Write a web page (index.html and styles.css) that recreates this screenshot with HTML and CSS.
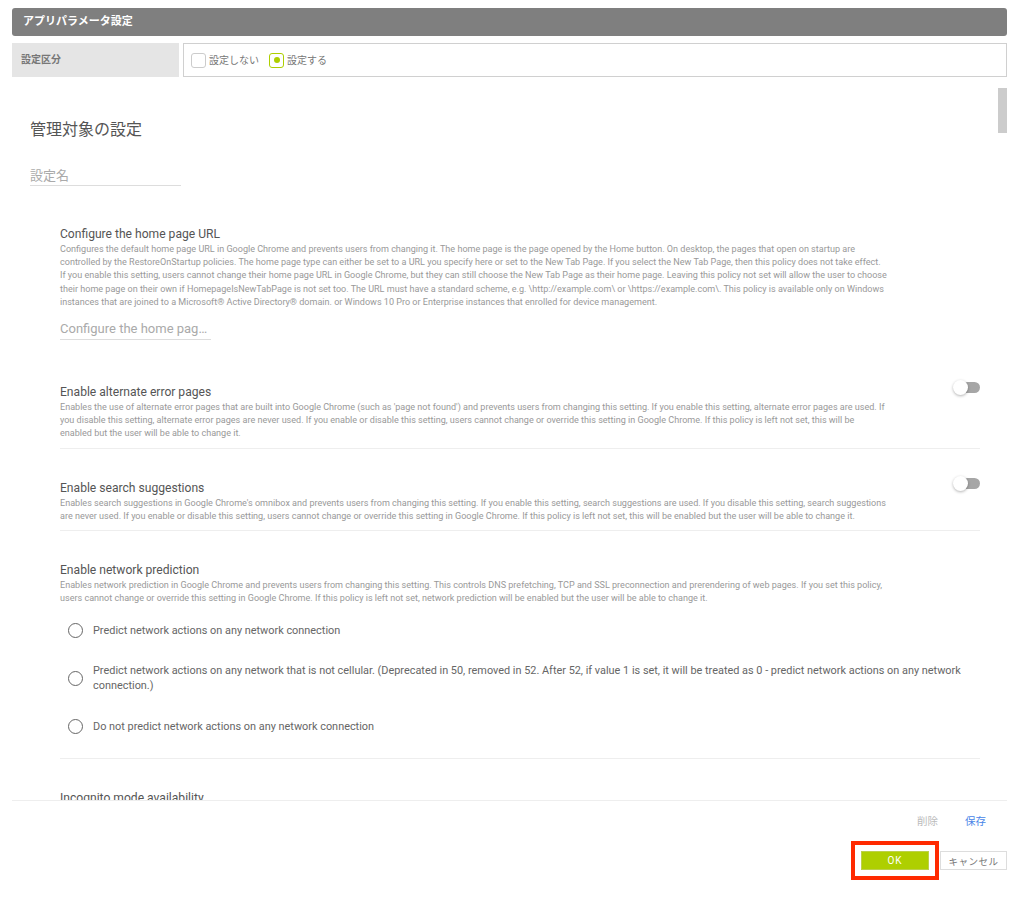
FILE: index.html
```html
<!DOCTYPE html>
<html lang="ja">
<head>
    <meta charset="UTF-8">
    <meta name="viewport" content="width=device-width, initial-scale=1.0">
    <title>アプリパラメータ設定</title>
    <link rel="stylesheet" href="styles.css">
</head>
<body>
    <div class="panel-title">アプリパラメータ設定</div>
    <div class="setting-row">
        <div class="setting-label">設定区分</div>
        <div class="setting-value">
            <span class="check-box"></span>
            <span class="check-text">設定しない</span>
            <span class="check-box checked"></span>
            <span class="check-text">設定する</span>
        </div>
    </div>

    <div class="scroll-area">
        <div class="scroll-thumb"></div>
        <h2 class="page-title">管理対象の設定</h2>
        <div class="name-field">設定名</div>

        <div class="policy policy-url">
            <div class="policy-name">Configure the home page URL</div>
            <p class="policy-desc">Configures the default home page URL in Google Chrome and prevents users from changing it. The home page is the page opened by the Home button. On desktop, the pages that open on startup are controlled by the RestoreOnStartup policies. The home page type can either be set to a URL you specify here or set to the New Tab Page. If you select the New Tab Page, then this policy does not take effect. If you enable this setting, users cannot change their home page URL in Google Chrome, but they can still choose the New Tab Page as their home page. Leaving this policy not set will allow the user to choose their home page on their own if HomepageIsNewTabPage is not set too. The URL must have a standard scheme, e.g. \http://example.com\ or \https://example.com\. This policy is available only on Windows instances that are joined to a Microsoft® Active Directory® domain. or Windows 10 Pro or Enterprise instances that enrolled for device management.</p>
            <div class="url-field">Configure the home pag…</div>
        </div>

        <div class="policy policy-alt has-line">
            <div class="policy-name">Enable alternate error pages</div>
            <span class="toggle"></span>
            <p class="policy-desc">Enables the use of alternate error pages that are built into Google Chrome (such as 'page not found') and prevents users from changing this setting. If you enable this setting, alternate error pages are used. If you disable this setting, alternate error pages are never used. If you enable or disable this setting, users cannot change or override this setting in Google Chrome. If this policy is left not set, this will be enabled but the user will be able to change it.</p>
        </div>

        <div class="policy policy-next has-line">
            <div class="policy-name">Enable search suggestions</div>
            <span class="toggle"></span>
            <p class="policy-desc">Enables search suggestions in Google Chrome's omnibox and prevents users from changing this setting. If you enable this setting, search suggestions are used. If you disable this setting, search suggestions are never used. If you enable or disable this setting, users cannot change or override this setting in Google Chrome. If this policy is left not set, this will be enabled but the user will be able to change it.</p>
        </div>

        <div class="policy policy-next policy-net has-line">
            <div class="policy-name">Enable network prediction</div>
            <p class="policy-desc">Enables network prediction in Google Chrome and prevents users from changing this setting. This controls DNS prefetching, TCP and SSL preconnection and prerendering of web pages. If you set this policy, users cannot change or override this setting in Google Chrome. If this policy is left not set, network prediction will be enabled but the user will be able to change it.</p>
            <div class="radio-list">
                <div class="radio-item"><span class="radio"></span><span>Predict network actions on any network connection</span></div>
                <div class="radio-item"><span class="radio"></span><span>Predict network actions on any network that is not cellular. (Deprecated in 50, removed in 52. After 52, if value 1 is set, it will be treated as 0 - predict network actions on any network connection.)</span></div>
                <div class="radio-item"><span class="radio"></span><span>Do not predict network actions on any network connection</span></div>
            </div>
        </div>

        <div class="policy policy-next">
            <div class="policy-name">Incognito mode availability</div>
        </div>
    </div>

    <div class="action-bar">
        <span class="link-delete">削除</span>
        <span class="link-save">保存</span>
    </div>
    <div class="button-row">
        <button class="btn-ok">OK</button>
        <button class="btn-cancel">キャンセル</button>
    </div>
</body>
</html>
```

FILE: styles.css
```css
html, body {
    height: 100%;
}
body {
    margin: 0;
    padding: 8px 14px 0 12px;
    box-sizing: border-box;
    overflow: hidden;
    background: #fff;
    font-family: Roboto, "Noto Sans CJK JP", sans-serif;
    color: #444;
}
.panel-title {
    height: 28px;
    line-height: 28px;
    padding-left: 11px;
    background: #7f7f7f;
    border-radius: 3px;
    color: #fff;
    font-size: 11px;
    font-weight: 700;
}
.setting-row {
    display: flex;
    gap: 4px;
    margin-top: 7px;
    height: 34px;
}
.setting-label {
    width: 167px;
    padding-left: 9px;
    box-sizing: border-box;
    line-height: 33px;
    background: #e5e5e5;
    color: #777;
    font-size: 10px;
    font-weight: 700;
}
.setting-value {
    flex: 1;
    display: flex;
    align-items: center;
    padding-left: 7px;
    border: 1px solid #d0d0d0;
    font-size: 10px;
    color: #777;
}
.check-box {
    position: relative;
    width: 13px;
    height: 13px;
    margin-right: 3px;
    border: 1px solid #ccc;
    border-radius: 3px;
}
.check-box.checked {
    border-color: #aecf00;
}
.check-box.checked::after {
    content: "";
    position: absolute;
    top: 3.5px;
    left: 3.5px;
    width: 6px;
    height: 6px;
    border-radius: 50%;
    background: #aecf00;
}
.check-text {
    margin-right: 10px;
    padding-top: 1px;
    line-height: 14px;
}
.scroll-area {
    position: relative;
    height: 723px;
    overflow: hidden;
}
.scroll-thumb {
    position: absolute;
    top: 11px;
    right: 0;
    width: 9px;
    height: 45px;
    background: #ccc;
}
.page-title {
    margin: 43px 0 0 18px;
    font-size: 16px;
    line-height: 20px;
    font-weight: 400;
    color: #555;
}
.name-field {
    width: 151px;
    height: 19px;
    margin: 26px 0 0 18px;
    border-bottom: 1px solid #ddd;
    color: #aaa;
    font-size: 13px;
    line-height: 20px;
}
.policy {
    margin-left: 48px;
    width: 920px;
    position: relative;
}
.policy-url {
    margin-top: 41px;
}
.policy-alt {
    margin-top: 44px;
}
.policy-next {
    margin-top: 31px;
}
.has-line {
    border-bottom: 1px solid #eee;
}
.policy-name {
    font-size: 12.1px;
    line-height: 16px;
    color: #555;
}
.policy-url .policy-name {
    line-height: 15px;
}
.policy-desc {
    margin: 0;
    width: 828px;
    padding-top: 1px;
    font-size: 9.06px;
    line-height: 13.2px;
    color: #999;
}
.policy-alt .policy-desc,
.policy-next .policy-desc {
    padding-bottom: 7px;
}
.policy-net .policy-desc {
    padding-bottom: 1px;
}
.url-field {
    width: 151px;
    height: 21px;
    margin-top: 9px;
    border-bottom: 1px solid #ddd;
    color: #aaa;
    font-size: 13px;
    line-height: 21px;
}
.toggle {
    position: absolute;
    top: -2px;
    right: 0;
    width: 22px;
    height: 11px;
    border-radius: 6px;
    background: #a6a6a6;
}
.toggle::before {
    content: "";
    position: absolute;
    top: -2px;
    left: -5px;
    width: 15px;
    height: 15px;
    border-radius: 50%;
    background: #fff;
    box-shadow: 0 1px 3px rgba(0, 0, 0, 0.3);
}
.radio-list {
    padding: 0 0 8px;
}
.radio-item {
    display: flex;
    align-items: center;
    gap: 10px;
    min-height: 48px;
    padding-left: 8px;
    padding-right: 16px;
    font-size: 10.9px;
    line-height: 15px;
    color: #666;
}
.radio {
    flex: none;
    width: 13px;
    height: 13px;
    border: 1.5px solid #666;
    border-radius: 50%;
}
.action-bar {
    display: flex;
    justify-content: flex-end;
    gap: 27px;
    height: 39px;
    padding: 14px 21px 0 0;
    box-sizing: border-box;
    border-top: 1px solid #eee;
    font-size: 10.5px;
    line-height: 14px;
}
.link-delete {
    color: #bbb;
}
.link-save {
    color: #4a86e8;
}
.button-row {
    display: flex;
    justify-content: flex-end;
    align-items: flex-start;
    gap: 11px;
    margin-top: 12px;
}
.btn-ok {
    width: 68px;
    height: 19px;
    padding: 0;
    border: 1px solid #bcd04a;
    background: #aecf00;
    color: #fff;
    font-family: inherit;
    font-size: 10px;
    letter-spacing: 1px;
    outline: 4px solid #ff2a00;
    outline-offset: 6px;
}
.btn-cancel {
    width: 67px;
    height: 19px;
    padding: 0;
    border: 1px solid #ddd;
    background: #fff;
    color: #777;
    font-family: inherit;
    font-size: 9.5px;
    letter-spacing: 0.5px;
}
```
